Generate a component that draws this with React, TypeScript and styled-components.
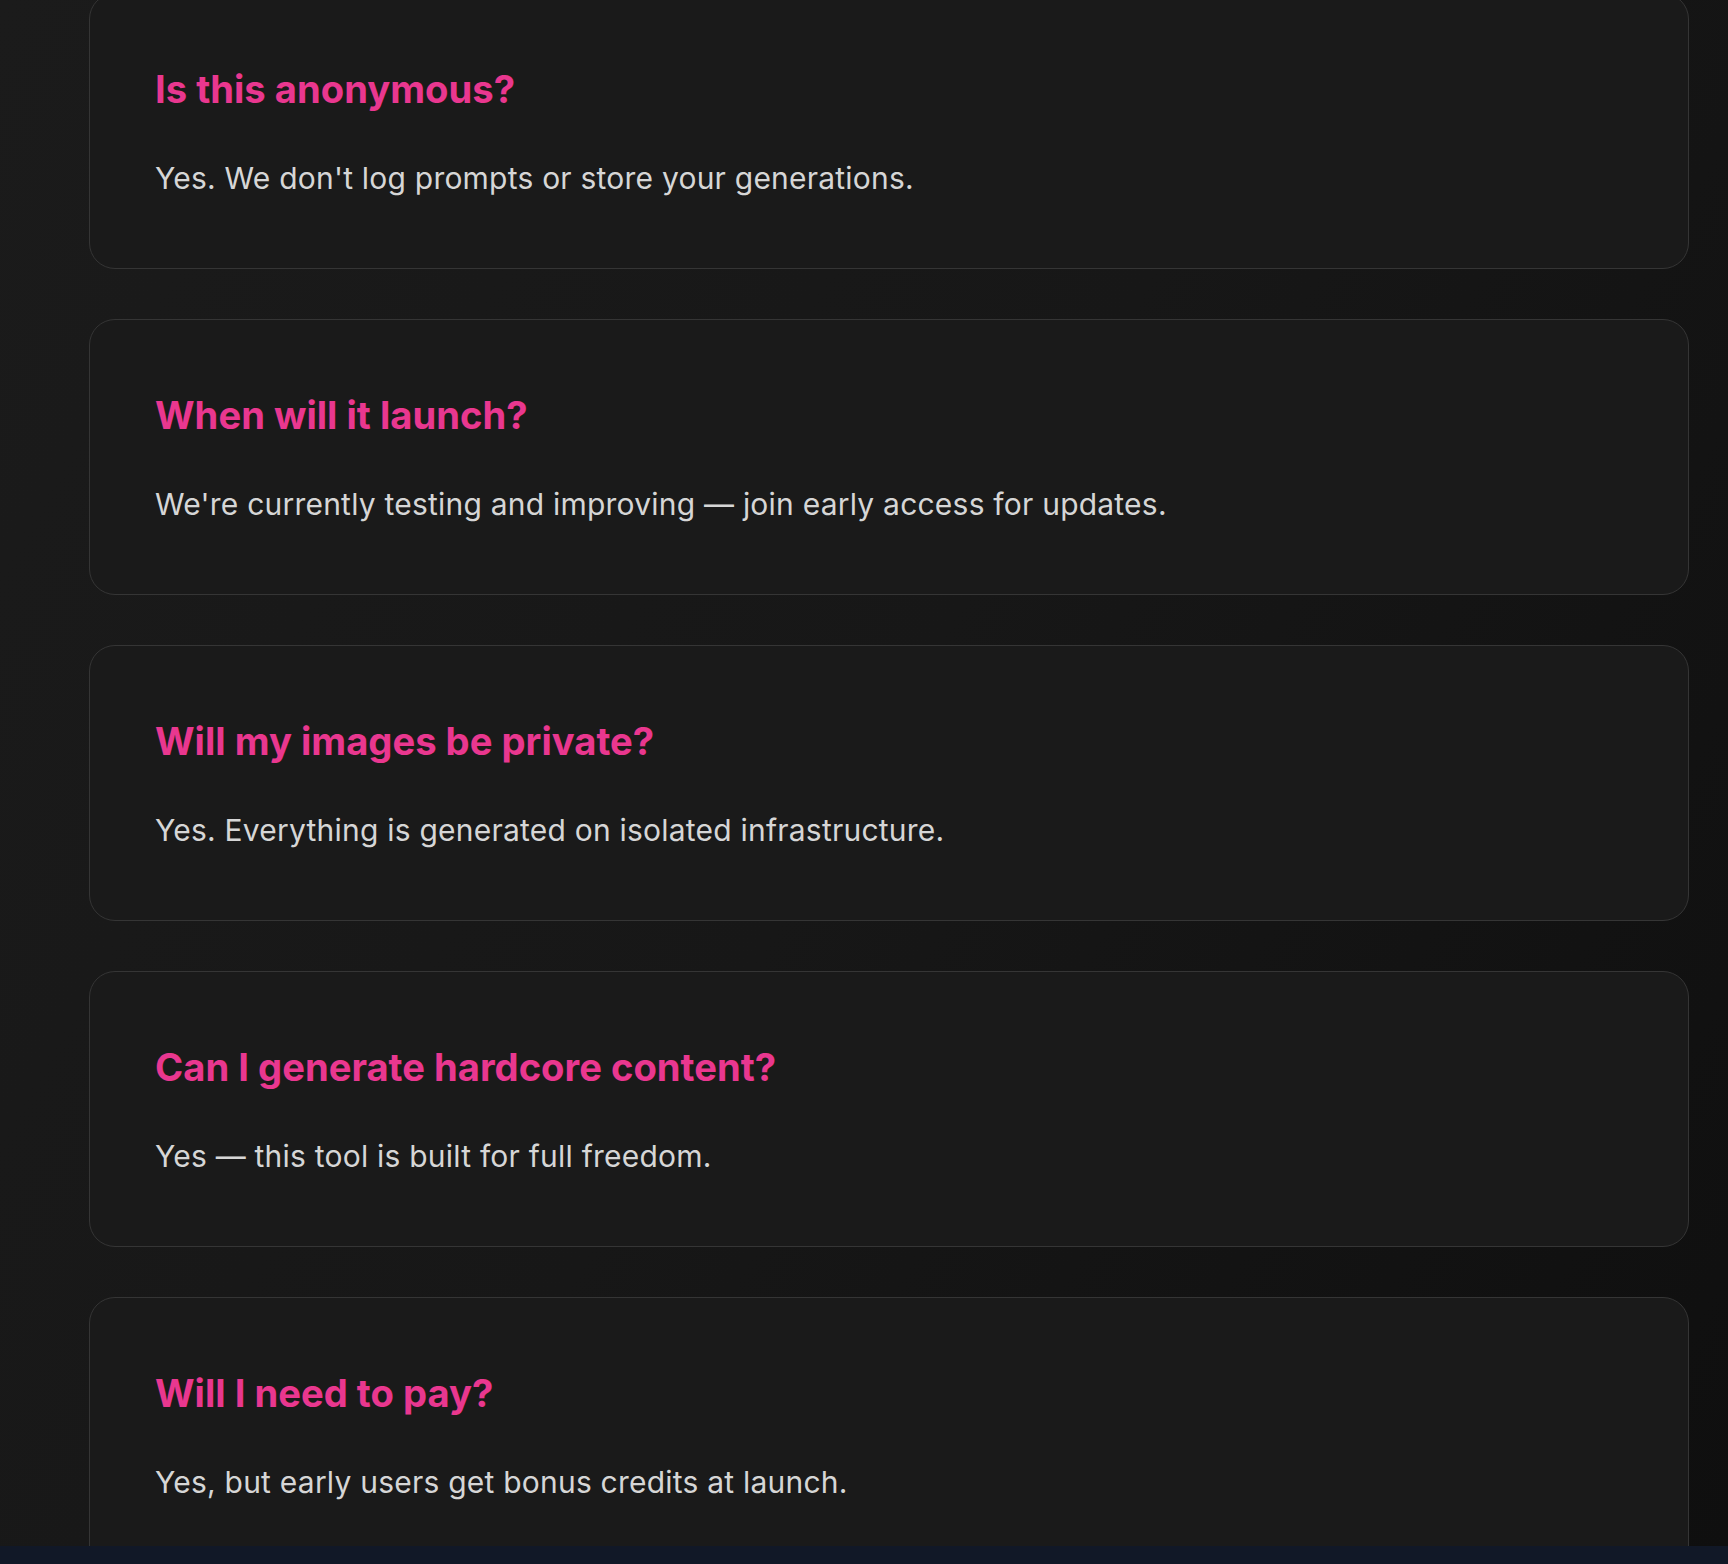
import React from "react";
import styled, { createGlobalStyle } from "styled-components";

const GlobalStyle = createGlobalStyle`
  html, body {
    margin: 0;
    padding: 0;
    background: #111827;
  }
  body {
    font-family: Inter, "Noto Sans", "Liberation Sans", sans-serif;
    -webkit-font-smoothing: antialiased;
  }
`;

const Page = styled.div`
  display: flex;
  flex-direction: column;
  height: 1564px;
  width: 1728px;
`;

const Main = styled.main`
  flex: 1;
  overflow: hidden;
  background: linear-gradient(120deg, #1b1b1b 0%, #171717 50%, #0f0f0f 100%);
`;

const FaqList = styled.section`
  display: flex;
  flex-direction: column;
  gap: 50px;
  margin-top: -7px;
  padding-left: 89px;
  width: 1600px;
`;

const Card = styled.article`
  box-sizing: border-box;
  height: 276px;
  padding: 71px 65px 69px;
  background: #1a1a1a;
  border: 1.5px solid #353535;
  border-radius: 26px;
  display: flex;
  flex-direction: column;
`;

const Question = styled.h3`
  margin: 0;
  font-size: 38.2px;
  line-height: 48px;
  font-weight: 700;
  letter-spacing: 0;
  color: #e9378f;
`;

const Answer = styled.p`
  margin: 45px 0 0;
  font-size: 30px;
  line-height: 40px;
  font-weight: 400;
  letter-spacing: 0.22px;
  color: #d6d6d6;
`;

const FooterBar = styled.div`
  height: 18px;
  background: #111827;
`;

const faqs = [
  { q: "Is this anonymous?", a: "Yes. We don't log prompts or store your generations." },
  { q: "When will it launch?", a: "We're currently testing and improving — join early access for updates." },
  { q: "Will my images be private?", a: "Yes. Everything is generated on isolated infrastructure." },
  { q: "Can I generate hardcore content?", a: "Yes — this tool is built for full freedom." },
  { q: "Will I need to pay?", a: "Yes, but early users get bonus credits at launch." },
];

export default function App() {
  return (
    <>
      <GlobalStyle />
      <Page>
        <Main>
          <FaqList>
            {faqs.map((f) => (
              <Card key={f.q}>
                <Question>{f.q}</Question>
                <Answer>{f.a}</Answer>
              </Card>
            ))}
          </FaqList>
        </Main>
        <FooterBar />
      </Page>
    </>
  );
}
